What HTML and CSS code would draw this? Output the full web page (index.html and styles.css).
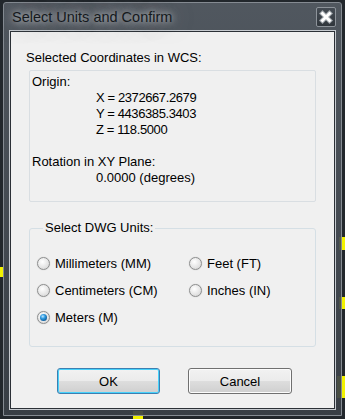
FILE: index.html
```html
<!DOCTYPE html>
<html lang="en">
<head>
  <meta charset="UTF-8">
  <title>Select Units and Confirm</title>
  <link rel="stylesheet" href="styles.css">
</head>
<body>

  <!-- bits of the drawing behind the dialog -->
  <span class="mark mark-r1"></span>
  <span class="mark mark-r2"></span>
  <span class="mark mark-r3"></span>
  <span class="mark mark-l1"></span>
  <span class="mark mark-b1"></span>

  <div class="window">
    <div class="titlebar">
      <span class="title">Select Units and Confirm</span>
      <button class="close" aria-label="Close">
        <svg width="20" height="20" viewBox="0 0 20 20">
          <path d="M6.5 6.5 L13.5 13.5 M13.5 6.5 L6.5 13.5" stroke="#9aa0a6" stroke-width="5" stroke-linecap="square"/>
          <path d="M6.5 6.5 L13.5 13.5 M13.5 6.5 L6.5 13.5" stroke="#ffffff" stroke-width="3" stroke-linecap="square"/>
        </svg>
      </button>
    </div>

    <div class="client">
      <div class="caption">Selected Coordinates in WCS:</div>

      <div class="coords">
        <div>Origin:</div>
        <div class="value num">X = 2372667.2679</div>
        <div class="value num">Y = 4436385.3403</div>
        <div class="value num">Z = 118.5000</div>
        <div class="blank"></div>
        <div>Rotation in XY Plane:</div>
        <div class="value">0.0000 (degrees)</div>
      </div>

      <fieldset class="units">
        <legend>Select DWG Units:</legend>
        <div class="unit-grid">
          <label class="radio"><span class="dot"></span>Millimeters (MM)</label>
          <label class="radio"><span class="dot"></span>Feet (FT)</label>
          <label class="radio"><span class="dot"></span>Centimeters (CM)</label>
          <label class="radio"><span class="dot"></span>Inches (IN)</label>
          <label class="radio"><span class="dot checked"></span>Meters (M)</label>
        </div>
      </fieldset>

      <div class="buttons">
        <button class="btn btn-default">OK</button>
        <button class="btn">Cancel</button>
      </div>
    </div>
  </div>

</body>
</html>
```

FILE: styles.css
```css
body {
  margin: 0;
  width: 345px;
  height: 419px;
  overflow: hidden;
  position: relative;
  background: #22272c;
  font-family: "Liberation Sans", Arial, sans-serif;
}

.mark {
  position: absolute;
  background: #f2f200;
}
.mark-r1 { left: 339px; top: 237px; width: 6px; height: 13px; }
.mark-r2 { left: 339px; top: 297px; width: 6px; height: 12px; }
.mark-r3 { left: 337px; top: 376px; width: 8px; height: 22px; }
.mark-l1 { left: 0; top: 267px; width: 4px; height: 10px; }
.mark-b1 { left: 133px; top: 411px; width: 10px; height: 8px; }

.window {
  position: relative;
  margin: 2px 0 0 3px;
  width: 339px;
  height: 414px;
  box-sizing: border-box;
  border: 1px solid #858b92;
  border-radius: 3px 3px 0 0;
  padding: 0 5px 5px 5px;
  background: linear-gradient(rgba(84, 91, 99, 0.93), rgba(58, 64, 71, 0.93));
}

.titlebar {
  height: 27px;
  display: flex;
  align-items: flex-start;
}

.title {
  display: block;
  margin: 1px 0 0 3px;
  line-height: 27px;
  font-size: 14.5px;
  color: #15191d;
  text-shadow: 0 0 6px rgba(220, 223, 226, 0.9), 0 0 14px rgba(190, 194, 198, 0.8), 0 0 22px rgba(170, 175, 180, 0.7);
}

.close {
  margin: 4px 0 0 auto;
  width: 20px;
  height: 20px;
  padding: 0;
  border: 1px solid #8d939a;
  border-radius: 2px;
  background: linear-gradient(#454c54, #30363c);
  box-sizing: border-box;
  display: flex;
  align-items: center;
  justify-content: center;
}
.close svg {
  display: block;
  margin: -1px;
}

.client {
  height: 380px;
  box-sizing: border-box;
  border: 1px solid #c6cacf;
  box-shadow: inset 0 0 0 1px #2b3036;
  background: #f0f0f0;
  padding: 19px 19px 0 19px;
  font-size: 13px;
  line-height: 16px;
  color: #000;
}

.caption {
  margin-left: -3px;
}

.coords {
  margin-top: 4px;
  height: 132px;
  box-sizing: border-box;
  border: 1px solid #d9dee2;
  border-radius: 2px;
  padding: 3px 2px 0 2px;
}
.coords .value {
  margin-left: 64px;
}
.coords .num {
  letter-spacing: -0.4px;
}
.coords .blank {
  height: 16px;
}

.units {
  margin: 18px 0 0 0;
  height: 127px;
  box-sizing: border-box;
  border: 1px solid #d5dfe5;
  border-radius: 3px;
  padding: 14px 0 0 7px;
  min-width: 0;
}
.units legend {
  margin-left: 6px;
  padding: 0 2px;
  line-height: 16px;
}

.unit-grid {
  display: grid;
  grid-template-columns: 152px auto;
  grid-auto-rows: 27px;
}

.radio {
  display: flex;
  align-items: center;
  gap: 5px;
}

.dot {
  width: 13px;
  height: 13px;
  box-sizing: border-box;
  border-radius: 50%;
  border: 1px solid #8e8f8f;
  background: radial-gradient(circle at 40% 35%, #ffffff 0%, #e6e6e6 55%, #cfcfcf 100%);
  box-shadow: 0 0 1px rgba(0, 0, 0, 0.25);
  display: flex;
  align-items: center;
  justify-content: center;
  flex: none;
}
.dot.checked::after {
  content: "";
  width: 7px;
  height: 7px;
  border-radius: 50%;
  background: radial-gradient(circle at 40% 35%, #bfe7ff 0%, #2f9be0 35%, #0b5a9a 75%, #083f6e 100%);
}

.buttons {
  margin-top: 21px;
  display: flex;
  gap: 28px;
  padding-left: 28px;
}

.btn {
  width: 103px;
  height: 26px;
  box-sizing: border-box;
  border: 1px solid #707070;
  border-radius: 3px;
  background: linear-gradient(#f2f2f2 0%, #ebebeb 48%, #dddddd 52%, #cfcfcf 100%);
  box-shadow: inset 0 0 0 1px #fcfcfc;
  font-family: "Liberation Sans", Arial, sans-serif;
  font-size: 13px;
  color: #000;
  padding: 0;
}
.btn-default {
  border-color: #3c7fb1;
  box-shadow: inset 0 0 0 1px #48d2fb;
}
.btn + .btn {
  width: 104px;
}
```
